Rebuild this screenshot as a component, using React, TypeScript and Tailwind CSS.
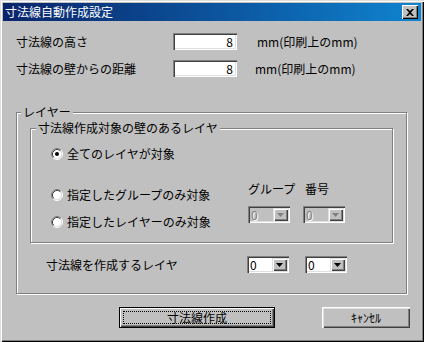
import type { ReactNode } from "react";

const FONT = "font-['Noto_Sans_CJK_JP','Noto_Sans',sans-serif]";

/** Classic sunken 3D radio */
function Radio({ checked }: { checked?: boolean }) {
  return (
    <svg width="12" height="12" viewBox="0 0 12 12" className="shrink-0">
      <circle cx="6" cy="6" r="4.5" fill="#fff" />
      <path d="M2.11 9.89 A5.5 5.5 0 0 1 9.89 2.11" fill="none" stroke="#808080" strokeWidth="1" />
      <path d="M9.89 2.11 A5.5 5.5 0 0 1 2.11 9.89" fill="none" stroke="#fff" strokeWidth="1" />
      <path d="M2.82 9.18 A4.5 4.5 0 0 1 9.18 2.82" fill="none" stroke="#404040" strokeWidth="1" />
      <path d="M9.18 2.82 A4.5 4.5 0 0 1 2.82 9.18" fill="none" stroke="#dfdfdf" strokeWidth="1" />
      {checked && <circle cx="6" cy="6" r="2" fill="#000" />}
    </svg>
  );
}

function RadioRow({ checked, label, className }: { checked?: boolean; label: string; className?: string }) {
  return (
    <div className={`flex items-center h-[12px] gap-[4px] ${className ?? ""}`}>
      <Radio checked={checked} />
      <span className="leading-[12px] whitespace-nowrap">{label}</span>
    </div>
  );
}

/** Dropdown list box */
function Combo({ disabled }: { disabled?: boolean }) {
  return (
    <div
      className={`w-[42px] h-[17px] flex p-[2px] shadow-[inset_1px_1px_#808080,inset_2px_2px_#404040,inset_-1px_-1px_#fff,inset_-2px_-2px_#dfdfdf] ${
        disabled ? "bg-[#c0c0c0]" : "bg-white"
      }`}
    >
      <span
        className={`flex-1 pl-[1px] text-[12px] leading-[13px] ${
          disabled ? "text-[#808080] [text-shadow:1px_1px_#fff]" : "text-black"
        }`}
      >
        0
      </span>
      <span className="w-[15px] flex items-center justify-center bg-[#c0c0c0] shadow-[inset_1px_1px_#dfdfdf,inset_2px_2px_#fff,inset_-1px_-1px_#404040,inset_-2px_-2px_#808080]">
        <svg width="7" height="4" viewBox="0 0 7 4">
          <path d="M0 0 H7 L3.5 4 Z" fill={disabled ? "#808080" : "#000"} />
        </svg>
      </span>
    </div>
  );
}

function EditBox({ value }: { value: string }) {
  return (
    <div className="w-[64px] h-[17px] bg-white flex items-center justify-end pr-[4px] shadow-[inset_1px_1px_#808080,inset_2px_2px_#404040,inset_-1px_-1px_#fff,inset_-2px_-2px_#dfdfdf]">
      <span className="leading-[12px]">{value}</span>
    </div>
  );
}

/** Etched group frame with caption over its top line */
function GroupBox({
  caption,
  captionLeft,
  className,
  children,
}: {
  caption: string;
  captionLeft: string;
  className?: string;
  children: ReactNode;
}) {
  return (
    <div
      className={`relative border border-[#808080] shadow-[1px_1px_0_#fff,inset_1px_1px_0_#fff] ${className ?? ""}`}
    >
      <span className={`absolute top-[-8px] ${captionLeft} px-[2px] bg-[#c0c0c0] leading-[14px] whitespace-nowrap`}>
        {caption}
      </span>
      {children}
    </div>
  );
}

export default function App() {
  return (
    <div
      className={`w-[424px] h-[342px] p-[3px] bg-[#c0c0c0] flex flex-col text-[12px] text-black ${FONT} shadow-[inset_1px_1px_#dfdfdf,inset_2px_2px_#fff,inset_-1px_-1px_#000,inset_-2px_-2px_#808080]`}
    >
      {/* Title bar */}
      <div className="h-[18px] flex items-center justify-between pl-[2px] pr-[3px] bg-gradient-to-r from-[#0a246a] to-[#1084d0]">
        <span className="text-white leading-[14px]">寸法線自動作成設定</span>
        <button
          type="button"
          className="w-[16px] h-[14px] flex items-center justify-center bg-[#c0c0c0] shadow-[inset_1px_1px_#fff,inset_-1px_-1px_#000,inset_-2px_-2px_#808080]"
        >
          <svg width="8" height="7" viewBox="0 0 8 7">
            <path d="M0 0 L2 0 L4 2 L6 0 L8 0 L5 3.5 L8 7 L6 7 L4 5 L2 7 L0 7 L3 3.5 Z" fill="#000" />
          </svg>
        </button>
      </div>

      {/* Size fields */}
      <div className="mt-[12px] flex items-center h-[17px] pl-[13px]">
        <span className="w-[157px] leading-[12px]">寸法線の高さ</span>
        <EditBox value="8" />
        <span className="ml-[20px] leading-[12px]">mm(印刷上のmm)</span>
      </div>
      <div className="mt-[10px] flex items-center h-[17px] pl-[13px]">
        <span className="w-[157px] leading-[12px]">寸法線の壁からの距離</span>
        <EditBox value="8" />
        <span className="ml-[18px] leading-[12px]">mm(印刷上のmm)</span>
      </div>

      {/* Layer group */}
      <GroupBox caption="レイヤー" captionLeft="left-[4px]" className="mt-[35px] ml-[13px] w-[391px] h-[182px] pt-[15px] pl-[13px]">
        <GroupBox caption="寸法線作成対象の壁のあるレイヤ" captionLeft="left-[5px]" className="w-[363px] h-[115px] flex">
          <div className="w-[217px] pl-[20px] flex flex-col">
            <RadioRow checked label="全てのレイヤが対象" className="mt-[19px]" />
            <RadioRow label="指定したグループのみ対象" className="mt-[29px]" />
            <RadioRow label="指定したレイヤーのみ対象" className="mt-[15px]" />
          </div>
          <div className="flex flex-col pt-[54px]">
            <div className="flex leading-[12px]">
              <span className="w-[57px]">グループ</span>
              <span>番号</span>
            </div>
            <div className="mt-[11px] flex gap-[13px]">
              <Combo disabled />
              <Combo disabled />
            </div>
          </div>
        </GroupBox>

        <div className="mt-[13px] flex items-center h-[17px] pl-[16px]">
          <span className="w-[201px] leading-[12px]">寸法線を作成するレイヤ</span>
          <div className="flex gap-[16px]">
            <Combo />
            <Combo />
          </div>
        </div>
      </GroupBox>

      {/* Buttons */}
      <div className="mt-[13px] ml-[116px] flex gap-[47px]">
        <button
          type="button"
          className="w-[156px] h-[21px] flex border border-black bg-[#c0c0c0] shadow-[inset_1px_1px_#fff,inset_-1px_-1px_#404040,inset_-2px_-2px_#808080]"
        >
          <span className="flex-1 m-[3px] border border-dotted border-black flex items-center justify-center leading-[12px]">
            寸法線作成
          </span>
        </button>
        <button
          type="button"
          className="w-[88px] h-[21px] flex items-center justify-center bg-[#c0c0c0] leading-[12px] shadow-[inset_1px_1px_#fff,inset_2px_2px_#dfdfdf,inset_-1px_-1px_#404040,inset_-2px_-2px_#808080]"
        >
          ｷｬﾝｾﾙ
        </button>
      </div>
    </div>
  );
}
